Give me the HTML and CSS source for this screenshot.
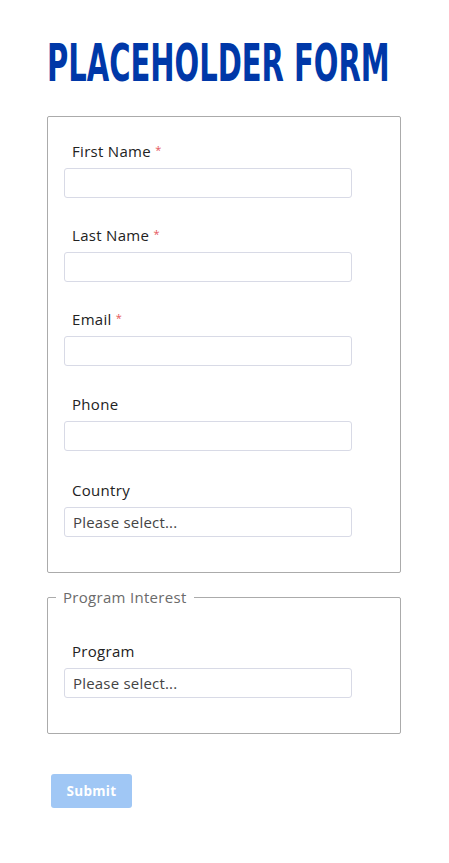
FILE: index.html
```html
<!DOCTYPE html>
<html lang="en">
<head>
<meta charset="utf-8">
<title>Placeholder Form</title>
<link rel="stylesheet" href="styles.css">
</head>
<body>
<main class="page">
  <h1 class="title">PLACEHOLDER FORM</h1>
  <form class="form">
    <fieldset class="group">
      <div class="field">
        <label class="label">First Name <span class="req">*</span></label>
        <input class="input" type="text">
      </div>
      <div class="field">
        <label class="label">Last Name <span class="req">*</span></label>
        <input class="input" type="text">
      </div>
      <div class="field">
        <label class="label">Email <span class="req">*</span></label>
        <input class="input" type="text">
      </div>
      <div class="field field-phone">
        <label class="label">Phone</label>
        <input class="input" type="text">
      </div>
      <div class="field field-country">
        <label class="label">Country</label>
        <div class="select">Please select...</div>
      </div>
    </fieldset>
    <fieldset class="group group-legend">
      <legend class="legend">Program Interest</legend>
      <div class="field">
        <label class="label">Program</label>
        <div class="select">Please select...</div>
      </div>
    </fieldset>
    <button class="submit" type="button">Submit</button>
  </form>
</main>
</body>
</html>
```
FILE: styles.css
```css
* { box-sizing: border-box; }
html, body { margin: 0; padding: 0; background: #fff; }
body { font-family: "Open Sans", "DejaVu Sans", sans-serif; color: #222; }
.page { padding: 34px 0 40px 47px; width: 449px; }
.title {
  margin: 0 0 24px 0;
  font-family: "DejaVu Sans Condensed", "DejaVu Sans", sans-serif;
  font-weight: 700;
  font-size: 52px;
  line-height: 58px;
  color: #0038a8;
  letter-spacing: 0;
  transform-origin: left center;
  transform: scaleX(0.62);
  white-space: nowrap;
}
.form { display: flex; flex-direction: column; align-items: flex-start; }
.group {
  margin: 0;
  width: 354px;
  border: 1px solid #ababab;
  border-radius: 2px;
  padding: 24px 16px 35px 16px;
  display: flex;
  flex-direction: column;
  gap: 27px;
}
.field-phone { margin-top: 1px; }
.field-country { margin-top: 2px; }
.group-legend { margin-top: 14px; padding-top: 34px; padding-bottom: 35px; }
.legend {
  padding: 0 7px;
  margin-left: -8px;
  font-size: 15px;
  letter-spacing: 0.3px;
  line-height: 20px;
  color: #6b6b6b;
}
.field { display: flex; flex-direction: column; gap: 7px; }
.label {
  display: block;
  height: 20px;
  padding-left: 8px;
  font-size: 15px;
  letter-spacing: 0.3px;
  line-height: 20px;
  color: #222;
}
.req { color: #e5575c; font-size: 11px; line-height: 0; vertical-align: 3px; }
.input, .select {
  width: 288px;
  height: 30px;
  border: 1px solid #d8dae6;
  border-radius: 3px;
  background: #fff;
  font: inherit;
  margin: 0;
  padding: 0 8px;
}
.select {
  font-size: 15px;
  letter-spacing: 0.2px;
  line-height: 28px;
  color: #444;
}
.submit {
  margin: 40px 0 0 4px;
  width: 81px;
  height: 34px;
  border: none;
  border-radius: 3px;
  background: #a0c7f5;
  color: #fff;
  font-family: "Open Sans", "DejaVu Sans", sans-serif;
  font-weight: 700;
  font-size: 13.5px;
  letter-spacing: 0.3px;
  padding: 0;
}
```
